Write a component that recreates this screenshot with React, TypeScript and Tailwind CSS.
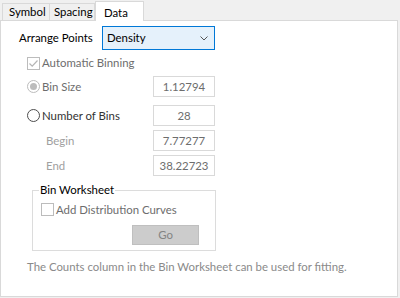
import React from "react";

function Tab({ label, active, w, pl }: { label: string; active?: boolean; w: string; pl: string }) {
  if (active) {
    return (
      <div className={`h-[20px] -mb-px pt-[2px] bg-white border border-b-0 border-[#d9d9d9] text-black z-10 relative ${w} ${pl}`}>
        {label}
      </div>
    );
  }
  return (
    <div className={`h-[17px] leading-[16px] bg-[#f0f0f0] border border-b-0 border-[#d9d9d9] -ml-px first:ml-0 text-black ${w} ${pl}`}>
      {label}
    </div>
  );
}

function Radio({ checked, disabled }: { checked?: boolean; disabled?: boolean }) {
  return (
    <div className={`w-[13px] h-[13px] shrink-0 rounded-full border flex items-center justify-center ${disabled ? "border-[#bcbcbc] bg-white" : "border-[#4d4d4d] bg-white"}`}>
      {checked && <div className={`w-[7px] h-[7px] rounded-full ${disabled ? "bg-[#bcbcbc]" : "bg-[#333]"}`} />}
    </div>
  );
}

function Check({ checked }: { checked?: boolean }) {
  return (
    <div className="w-[13px] h-[13px] shrink-0 border border-[#bcbcbc] bg-white flex items-center justify-center">
      {checked && (
        <svg width="11" height="11" viewBox="0 0 11 11" fill="none">
          <path d="M1.5 5.5 L4.2 8.2 L9.5 2.5" stroke="#b5b5b5" strokeWidth="1.2" />
        </svg>
      )}
    </div>
  );
}

function NumBox({ value }: { value: string }) {
  return (
    <div className="w-[62px] h-[21px] border border-[#d9d9d9] bg-white text-center text-[#6d6d6d] leading-[19px]">
      {value}
    </div>
  );
}

export default function App() {
  return (
    <div className="w-[400px] h-[298px] bg-[#f0f0f0] text-[11.4px] text-black overflow-hidden whitespace-nowrap" style={{ fontFamily: 'Lato, "Liberation Sans", sans-serif' }}>
      <div className="flex items-end h-[20px] pl-[2px]">
        <Tab label="Symbol" w="w-[48px]" pl="pl-[6px]" />
        <Tab label="Spacing" w="w-[46px]" pl="pl-[4px]" />
        <Tab label="Data" active w="w-[49px]" pl="pl-[8px]" />
      </div>
      <div className="w-[398px] h-[277px] bg-white border border-[#d9d9d9] flex flex-col">
        <div className="flex items-center h-[24px] mt-[5px]">
          <span className="ml-[18px] w-[83px]">Arrange Points</span>
          <div className="w-[113px] h-[24px] bg-[#e5f1fb] border border-[#0078d7] flex items-center justify-between pl-[4px] pr-[6px]">
            <span>Density</span>
            <svg width="8" height="5" viewBox="0 0 8 5" fill="none">
              <path d="M0.5 0.5 L4 4 L7.5 0.5" stroke="#555" strokeWidth="1" />
            </svg>
          </div>
        </div>
        <div className="flex items-center h-[16px] mt-[5px] ml-[26px] gap-[2px] text-[#6d6d6d]">
          <Check checked />
          <span>Automatic Binning</span>
        </div>
        <div className="flex items-center h-[21px] mt-[5px] ml-[26px]">
          <div className="flex items-center gap-[2px] w-[126px] text-[#6d6d6d]">
            <Radio checked disabled />
            <span>Bin Size</span>
          </div>
          <NumBox value="1.12794" />
        </div>
        <div className="flex items-center h-[21px] mt-[8px] ml-[26px]">
          <div className="flex items-center gap-[2px] w-[126px] text-[#333]">
            <Radio />
            <span>Number of Bins</span>
          </div>
          <NumBox value="28" />
        </div>
        <div className="flex items-center h-[21px] mt-[4px] ml-[26px]">
          <span className="w-[126px] pl-[19px] text-[#a0a0a0]">Begin</span>
          <NumBox value="7.77277" />
        </div>
        <div className="flex items-center h-[21px] mt-[4px] ml-[26px]">
          <span className="w-[126px] pl-[19px] text-[#a0a0a0]">End</span>
          <NumBox value="38.22723" />
        </div>
        <div className="relative ml-[31px] mt-[14px] w-[184px] h-[61px] border border-[#dcdcdc]">
          <span className="absolute -top-[9px] left-[6px] bg-white px-[1px] leading-[16px]">Bin Worksheet</span>
          <div className="flex flex-col">
            <div className="flex items-center gap-[2px] mt-[10px] ml-[8px] text-[#6d6d6d]">
              <Check />
              <span>Add Distribution Curves</span>
            </div>
            <div className="mt-[7px] ml-[99px] w-[67px] h-[20px] bg-[#cccccc] border border-[#bfbfbf] text-center leading-[18px] text-[#838383]">
              Go
            </div>
          </div>
        </div>
        <div className="mt-[7px] ml-[26px] text-[#8a8a8a]">
          The Counts column in the Bin Worksheet can be used for fitting.
        </div>
      </div>
    </div>
  );
}
